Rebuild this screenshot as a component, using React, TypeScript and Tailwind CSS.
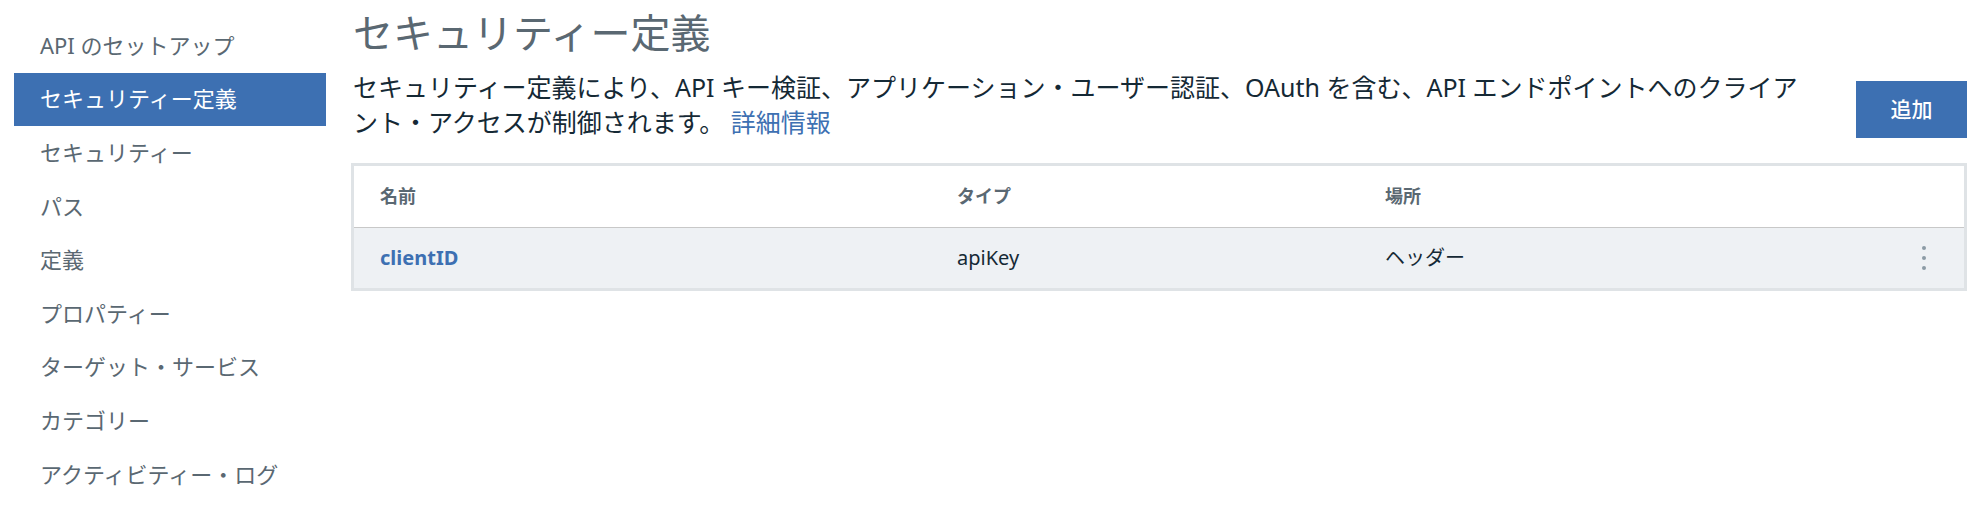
import React from "react";

const navItems = [
  "API のセットアップ",
  "セキュリティー定義",
  "セキュリティー",
  "パス",
  "定義",
  "プロパティー",
  "ターゲット・サービス",
  "カテゴリー",
  "アクティビティー・ログ",
];

const font = "font-['Noto_Sans','Noto_Sans_CJK_JP',sans-serif]";

export default function App() {
  return (
    <div className={`flex w-[1988px] h-[518px] bg-white ${font}`}>
      <nav className="w-[326px] pl-[14px] pt-[19px] flex flex-col shrink-0">
        {navItems.map((item, i) => (
          <div
            key={item}
            className={`h-[53.6px] flex items-center pl-[26px] pb-[1px] text-[22px] ${
              i === 1 ? "bg-[#3d70b2] text-white" : "text-[#5a6872]"
            }`}
          >
            {item}
          </div>
        ))}
      </nav>
      <main className="flex-1 ml-[25px] mr-[21px] flex flex-col">
        <h1 className="mt-[9px] h-[48px] leading-[48px] text-[40px] text-[#5a6872] pl-[2px]">
          セキュリティー定義
        </h1>
        <div className="flex items-start mt-[13px]">
          <p className="flex-1 text-[25px] leading-[35px] text-[#152935] pl-[2px] whitespace-nowrap">
            セキュリティー定義により、API キー検証、アプリケーション・ユーザー認証、OAuth を含む、API エンドポイントへのクライア
            <br />
            ント・アクセスが制御されます。 <span className="text-[#3d70b2]">詳細情報</span>
          </p>
          <button className="mt-[11px] w-[111px] h-[57px] bg-[#3d70b2] text-white text-[21px] font-medium flex items-center justify-center">
            追加
          </button>
        </div>
        <div className="mt-[23px] border-[3px] border-[#dfe3e6] w-[1616px]">
          <div className="grid grid-cols-[577px_428px_1fr_80px] h-[62px] items-center bg-white border-b border-[#c8c8c8]">
            <div className="pl-[26px] text-[18px] font-semibold text-[#5a6872]">名前</div>
            <div className="pl-[26px] text-[18px] font-semibold text-[#5a6872]">タイプ</div>
            <div className="pl-[26px] text-[18px] font-semibold text-[#5a6872]">場所</div>
            <div />
          </div>
          <div className="grid grid-cols-[577px_428px_1fr_80px] h-[60px] items-center bg-[#eef1f4]">
            <div className="pl-[26px] text-[20px] font-bold text-[#3d70b2]">clientID</div>
            <div className="pl-[26px] text-[20px] text-[#152935]">apiKey</div>
            <div className="pl-[26px] text-[20px] text-[#152935]">ヘッダー</div>
            <div className="flex flex-col items-center gap-[6px]">
              <span className="w-[4px] h-[4px] rounded-full bg-[#8c9ba5]" />
              <span className="w-[4px] h-[4px] rounded-full bg-[#8c9ba5]" />
              <span className="w-[4px] h-[4px] rounded-full bg-[#8c9ba5]" />
            </div>
          </div>
        </div>
      </main>
    </div>
  );
}
